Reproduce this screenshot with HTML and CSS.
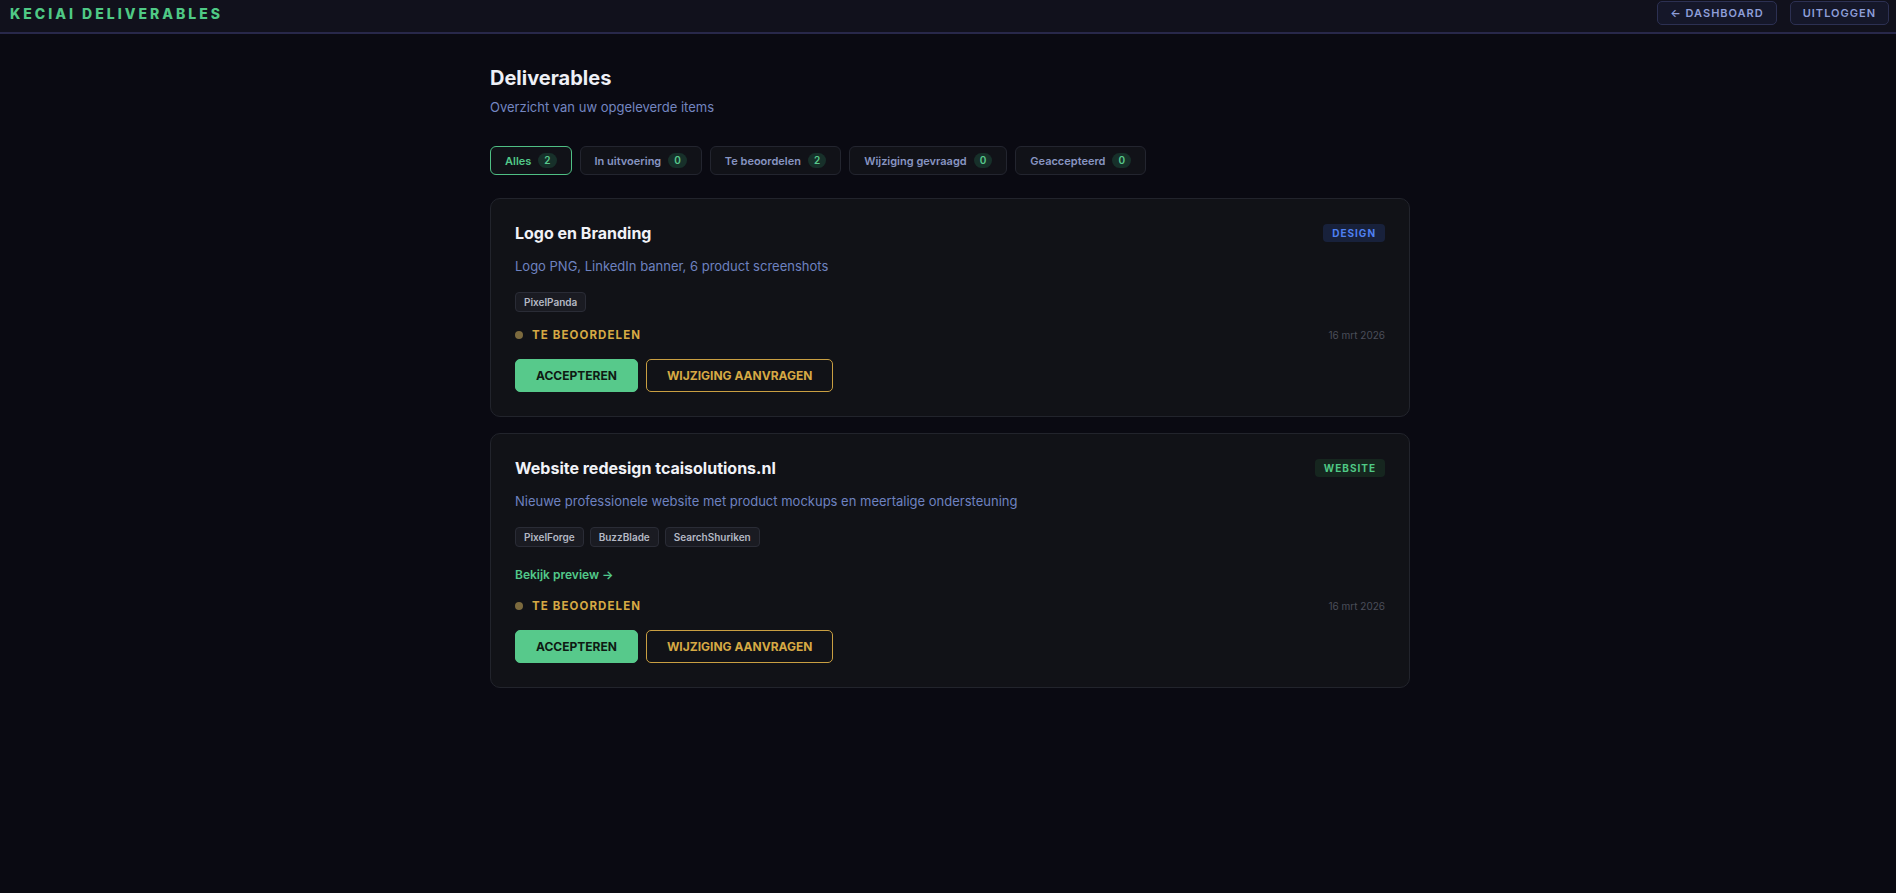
FILE: index.html
```html
<!DOCTYPE html>
<html lang="nl">
<head>
    <meta charset="UTF-8">
    <meta name="viewport" content="width=device-width, initial-scale=1.0">
    <title>Keciai Deliverables</title>
    <link rel="stylesheet" href="styles.css">
</head>
<body>
    <header class="topbar">
        <div class="brand">KECIAI DELIVERABLES</div>
        <nav class="top-actions">
            <a href="#" class="top-btn">&larr; DASHBOARD</a>
            <a href="#" class="top-btn">UITLOGGEN</a>
        </nav>
    </header>

    <main class="container">
        <h1>Deliverables</h1>
        <p class="subtitle">Overzicht van uw opgeleverde items</p>

        <div class="filters">
            <button class="filter active">Alles <span class="count">2</span></button>
            <button class="filter">In uitvoering <span class="count">0</span></button>
            <button class="filter">Te beoordelen <span class="count">2</span></button>
            <button class="filter">Wijziging gevraagd <span class="count">0</span></button>
            <button class="filter">Geaccepteerd <span class="count">0</span></button>
        </div>

        <div class="list">
            <div class="card">
                <div class="card-head">
                    <h3>Logo en Branding</h3>
                    <span class="type design">DESIGN</span>
                </div>
                <p class="desc">Logo PNG, LinkedIn banner, 6 product screenshots</p>
                <div class="tags">
                    <span class="tag">PixelPanda</span>
                </div>
                <div class="status-row">
                    <span class="status"><span class="dot"></span>TE BEOORDELEN</span>
                    <span class="date">16 mrt 2026</span>
                </div>
                <div class="actions">
                    <button class="btn accept">ACCEPTEREN</button>
                    <button class="btn change">WIJZIGING AANVRAGEN</button>
                </div>
            </div>

            <div class="card">
                <div class="card-head">
                    <h3>Website redesign tcaisolutions.nl</h3>
                    <span class="type website">WEBSITE</span>
                </div>
                <p class="desc">Nieuwe professionele website met product mockups en meertalige ondersteuning</p>
                <div class="tags">
                    <span class="tag">PixelForge</span>
                    <span class="tag">BuzzBlade</span>
                    <span class="tag">SearchShuriken</span>
                </div>
                <a href="#" class="preview">Bekijk preview &rarr;</a>
                <div class="status-row">
                    <span class="status"><span class="dot"></span>TE BEOORDELEN</span>
                    <span class="date">16 mrt 2026</span>
                </div>
                <div class="actions">
                    <button class="btn accept">ACCEPTEREN</button>
                    <button class="btn change">WIJZIGING AANVRAGEN</button>
                </div>
            </div>
        </div>
    </main>
</body>
</html>
```

FILE: styles.css
```css
body {
    font-family: 'Inter', 'Noto Sans', sans-serif;
    margin: 0;
    padding: 0;
    background: #0a0a12;
    color: #e8e9f0;
    min-height: 100vh;
}

/* Top bar */
.topbar {
    display: flex;
    justify-content: space-between;
    align-items: center;
    height: 32px;
    padding: 0 7px 0 10px;
    box-sizing: content-box;
    background: #11111c;
    border-bottom: 2px solid #28284a;
}

.brand {
    font-size: 14px;
    font-weight: 800;
    letter-spacing: 3px;
    color: #4fc985;
    margin-top: -6px;
}

.top-actions {
    display: flex;
    gap: 13px;
    margin-top: -7px;
}

.top-btn {
    display: inline-block;
    height: 22px;
    line-height: 22px;
    padding: 0 12px;
    font-size: 11px;
    font-weight: 600;
    letter-spacing: 1px;
    color: #8e9ed8;
    text-decoration: none;
    background: #151729;
    border: 1px solid #2c3052;
    border-radius: 5px;
}

/* Main */
.container {
    max-width: 920px;
    margin: 0 auto;
    padding: 30px 0 0 4px;
    box-sizing: content-box;
}

h1 {
    margin: 0;
    font-size: 20px;
    line-height: 28px;
    font-weight: 700;
    color: #eef0f6;
}

.subtitle {
    margin: 5px 0 0;
    font-size: 13px;
    line-height: 20px;
    color: #7486c0;
}

.filters {
    display: flex;
    gap: 8px;
    margin-top: 29px;
}

.filter {
    display: inline-flex;
    align-items: center;
    gap: 7px;
    padding: 6px 14px;
    font-family: inherit;
    font-size: 11px;
    line-height: 14px;
    font-weight: 600;
    color: #8895c2;
    background: #111218;
    border: 1px solid #23252f;
    border-radius: 6px;
    cursor: pointer;
}

.filter.active {
    color: #52c98a;
    border-color: #4fbf84;
}

.count {
    display: inline-block;
    padding: 0 6px;
    line-height: 15px;
    font-size: 10px;
    font-weight: 600;
    color: #58c98c;
    background: #17302a;
    border-radius: 8px;
}

.list {
    display: flex;
    flex-direction: column;
    gap: 16px;
    margin-top: 23px;
}

.card {
    background: #111217;
    border: 1px solid #22242c;
    border-radius: 10px;
    padding: 23px 24px 24px;
}

.card-head {
    display: flex;
    justify-content: space-between;
    align-items: center;
}

.card-head h3 {
    margin: 0;
    font-size: 16px;
    line-height: 22px;
    font-weight: 700;
    color: #f1f2f7;
}

.type {
    padding: 3px 9px;
    font-size: 10px;
    line-height: 12px;
    font-weight: 700;
    letter-spacing: 1px;
    border-radius: 4px;
}

.type.design {
    color: #4f80f2;
    background: #18213b;
}

.type.website {
    color: #4fc985;
    background: #16261f;
}

.desc {
    margin: 12px 0 0;
    font-size: 13px;
    line-height: 20px;
    color: #6e82c0;
}

.tags {
    display: flex;
    gap: 6px;
    margin-top: 16px;
}

.tag {
    padding: 0 8px;
    height: 18px;
    line-height: 18px;
    font-size: 10px;
    font-weight: 600;
    color: #b4b8c4;
    background: #1a1b22;
    border: 1px solid #2a2c36;
    border-radius: 4px;
}

.preview {
    display: block;
    margin-top: 20px;
    font-size: 12px;
    line-height: 16px;
    font-weight: 600;
    color: #52c98a;
    text-decoration: none;
}

.status-row {
    display: flex;
    justify-content: space-between;
    align-items: center;
    margin-top: 15px;
    line-height: 16px;
}

.status {
    display: flex;
    align-items: center;
    gap: 9px;
    font-size: 11.5px;
    font-weight: 700;
    letter-spacing: 1.1px;
    color: #d6a944;
}

.dot {
    width: 8px;
    height: 8px;
    border-radius: 50%;
    background: #7c6a3e;
}

.date {
    font-size: 10px;
    color: #4b4e5a;
}

.actions {
    display: flex;
    gap: 8px;
    margin-top: 16px;
}

.btn {
    height: 33px;
    padding: 0 20px;
    font-family: inherit;
    font-size: 12px;
    font-weight: 700;
    border-radius: 5px;
    cursor: pointer;
}

.btn.accept {
    color: #0e1a13;
    background: #57c98b;
    border: 1px solid #57c98b;
}

.btn.change {
    color: #d6a944;
    background: transparent;
    border: 1px solid #c99f42;
}
```
